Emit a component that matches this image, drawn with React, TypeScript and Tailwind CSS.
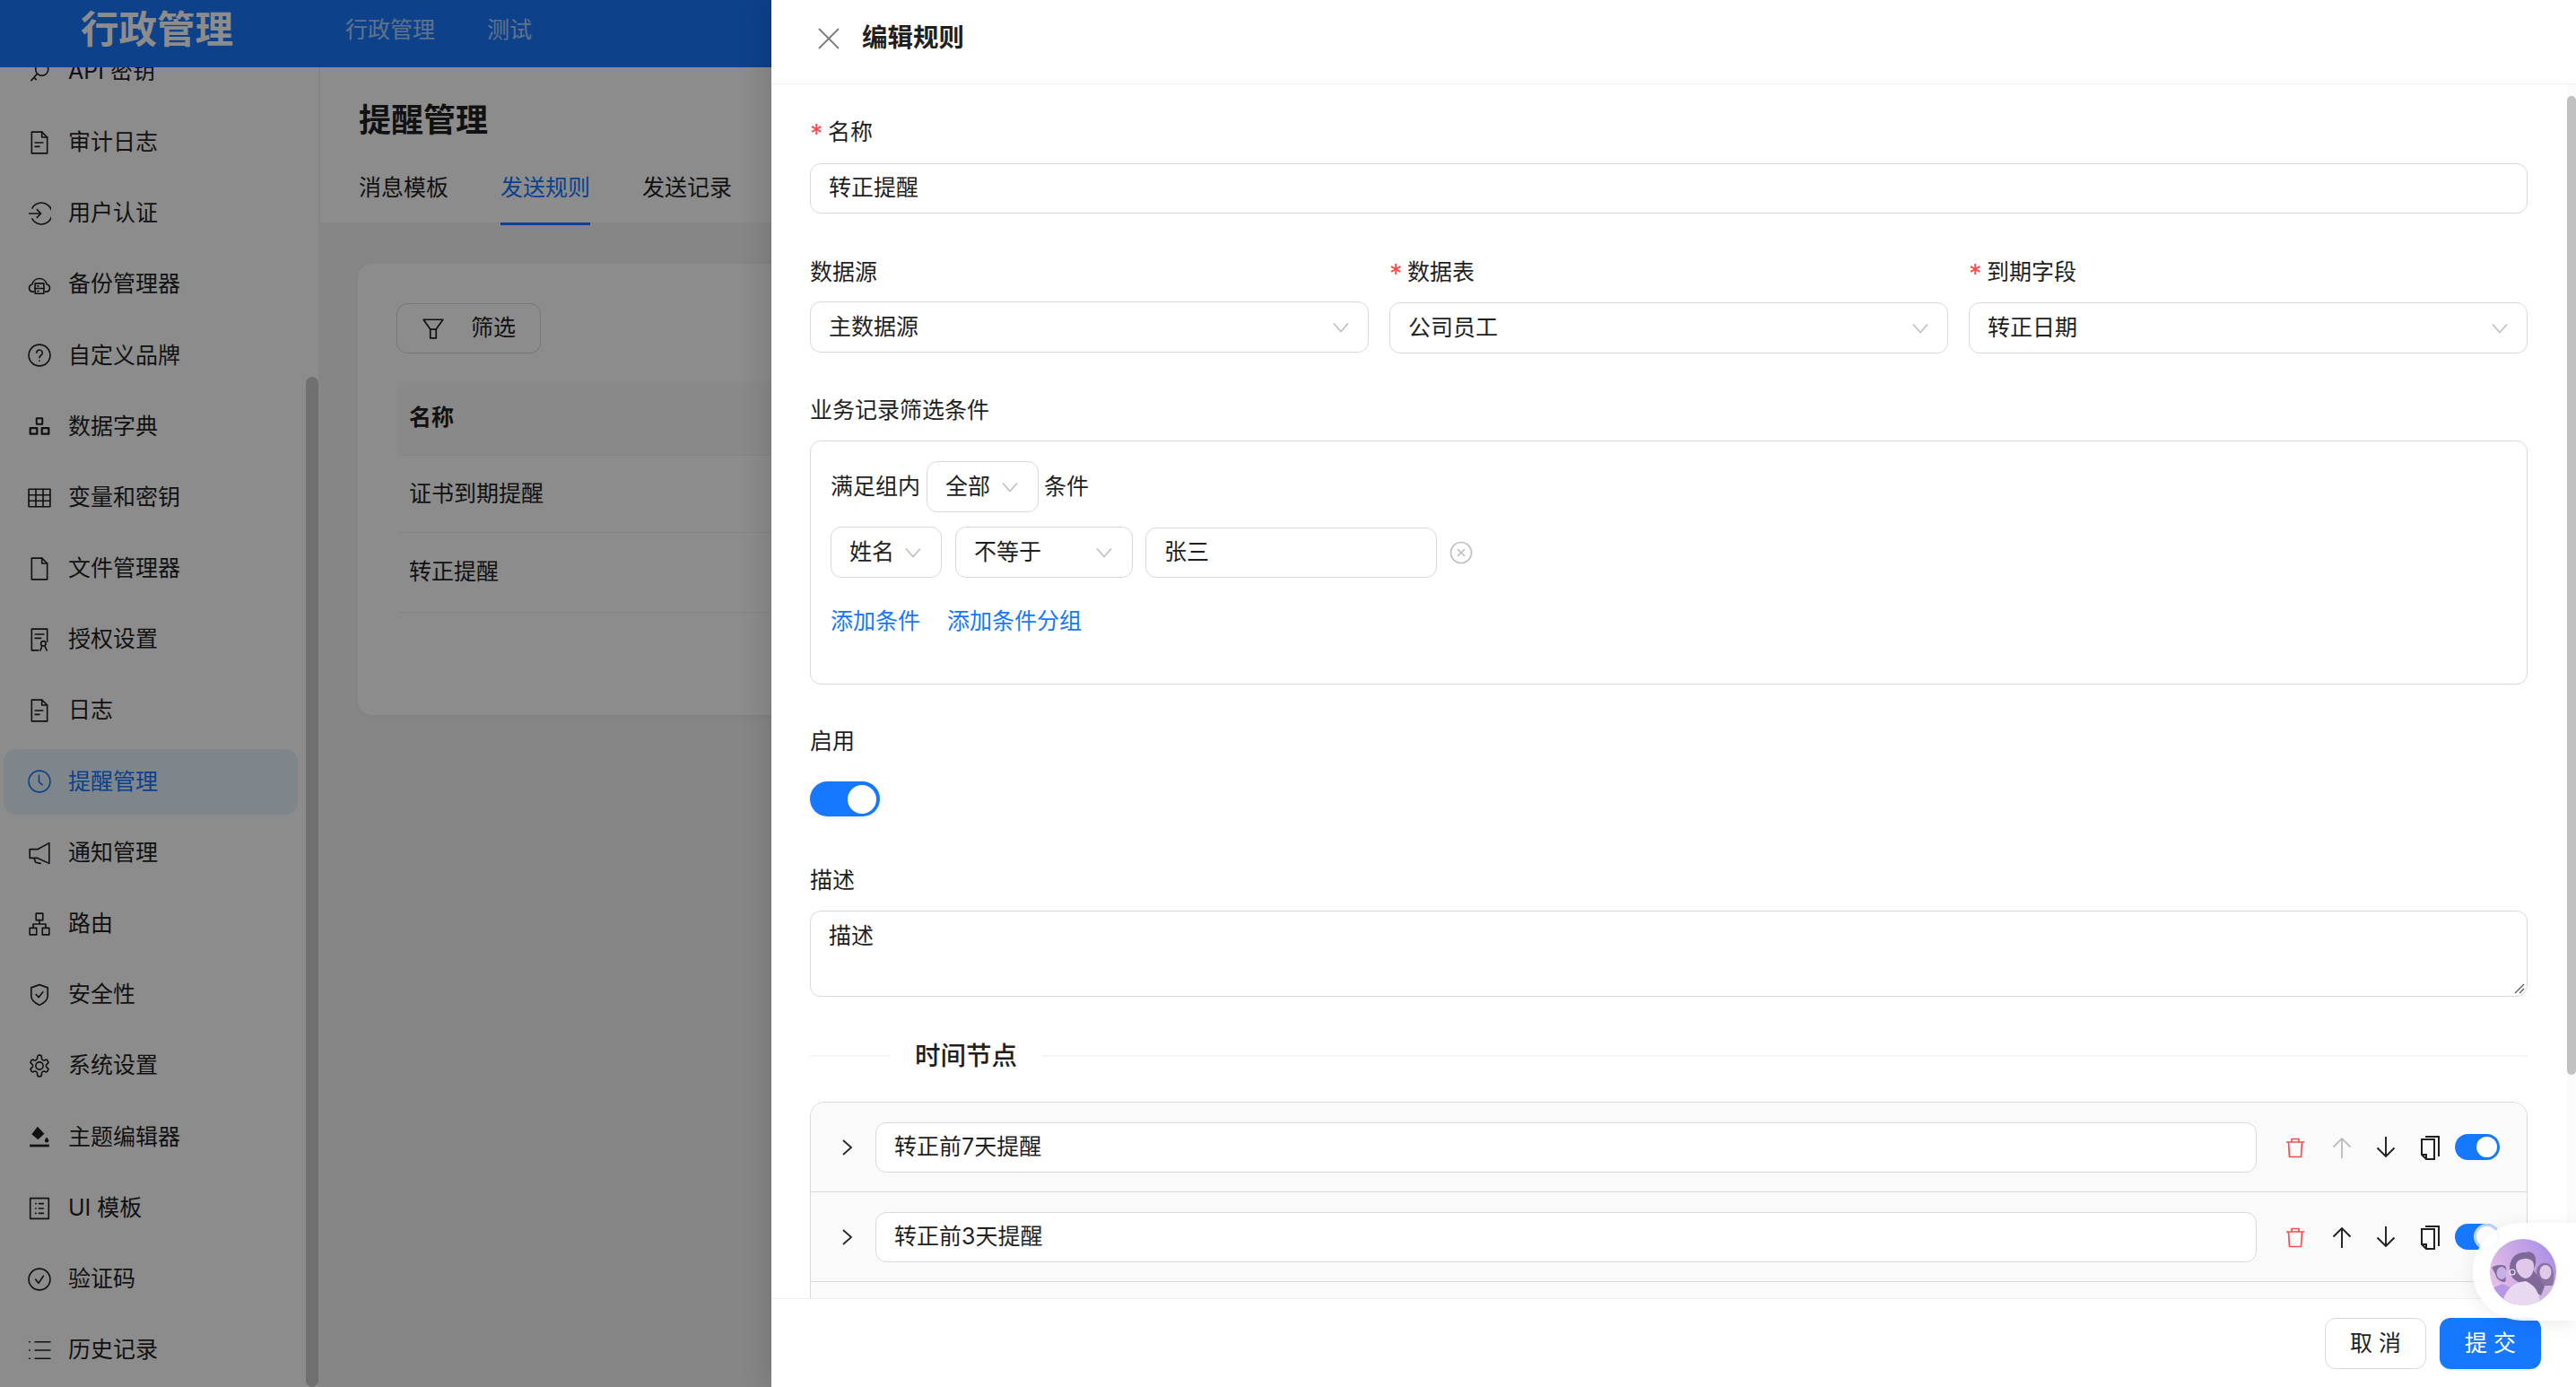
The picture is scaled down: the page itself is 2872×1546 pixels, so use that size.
import React from 'react';

const FONT = "[font-family:'Inter','Noto_Sans_CJK_SC','Noto_Sans',sans-serif]";

function Ico({ children, className = '' }: { children: React.ReactNode; className?: string }) {
  return (
    <svg viewBox="0 0 24 24" fill="none" stroke="currentColor" strokeWidth="1.5" strokeLinecap="round" strokeLinejoin="round" className={`w-[26px] h-[26px] shrink-0 ${className}`}>
      {children}
    </svg>
  );
}

const FileTextI = () => (
  <Ico>
    <path d="M4 1h10.500L20 6.500V23H4z" />
    <path d="M14.500 1v5.500H20" />
    <path d="M7.500 12h8M7.500 16h4.500" />
  </Ico>
);

const icons: Record<string, React.ReactNode> = {
  key: (
    <Ico>
      <circle cx="14.500" cy="9.500" r="6.500" />
      <path d="M9.800 14 3.500 21M6.500 18l2 2" />
    </Ico>
  ),
  file: <FileTextI />,
  login: (
    <Ico>
      <path d="M4.500 6.500a11 11 0 1 1 0 11" />
      <path d="M1.500 12h12M9.500 8l4 4-4 4" />
    </Ico>
  ),
  cloud: (
    <Ico>
      <path d="M6 19.500H5a3.800 3.800 0 0 1-.6-7.500 7.800 7.800 0 0 1 15.200 0A3.800 3.800 0 0 1 19 19.500h-1" />
      <rect x="7.500" y="11" width="9" height="10.500" />
      <path d="M7.500 16.200h9M10 13.700h1M10 18.900h1" />
    </Ico>
  ),
  help: (
    <Ico>
      <circle cx="12" cy="12" r="11" />
      <path d="M9 9.500a3 3 0 1 1 4.600 2.500c-1 .7-1.600 1.200-1.600 2.500" />
      <path d="M12 17.500v.3" />
    </Ico>
  ),
  boxes: (
    <Ico>
      <rect x="9" y="4" width="6" height="6" strokeWidth="1.800" />
      <rect x="2.500" y="14" width="7" height="6" strokeWidth="2.100" />
      <rect x="14.500" y="14" width="7" height="6" strokeWidth="2.100" />
    </Ico>
  ),
  table: (
    <Ico>
      <rect x="1" y="3" width="22" height="18" />
      <path d="M1 9h22M1 15h22M8.300 3v18M15.700 3v18" />
    </Ico>
  ),
  blank: (
    <Ico>
      <path d="M4 1h10.500L20 6.500V23H4z" />
      <path d="M14.500 1v5.500H20" />
    </Ico>
  ),
  badge: (
    <Ico>
      <path d="M11 23H4V1h16v13" />
      <path d="M7.500 6.500h9M7.500 10.500h6" />
      <circle cx="16" cy="16" r="2.500" />
      <path d="m14.500 18.500-1.500 4.500M17.500 18.500l2 4.500" />
    </Ico>
  ),
  clock: (
    <Ico>
      <circle cx="12" cy="12" r="11" />
      <path d="M11.500 5.500v7l3.500 3" />
    </Ico>
  ),
  horn: (
    <Ico>
      <path d="M22 1.500v21l-12-5.500H2V8h8z" />
      <path d="m6.500 17 1.500 4.500 5 1" />
    </Ico>
  ),
  tree: (
    <Ico>
      <rect x="8.500" y="1" width="7" height="7" />
      <rect x="2" y="16" width="7" height="7" />
      <rect x="15" y="16" width="7" height="7" />
      <path d="M12 8v4M5.500 16v-4h13v4" />
    </Ico>
  ),
  shield: (
    <Ico>
      <path d="M12 1.500 20.500 4.500v8.500c0 5-4 7.500-8.500 9.500-4.500-2-8.500-4.500-8.500-9.500V4.500z" />
      <path d="m8.500 11.500 2.700 3 4.300-5.500" />
    </Ico>
  ),
  gear: (
    <Ico>
      <path d="M12.220 1h-.44a2 2 0 0 0-2 2v1.180a2 2 0 0 1-1 1.730l-.43.250a2 2 0 0 1-2 0l-.15-.08a2 2 0 0 0-2.730.730l-.22.380a2 2 0 0 0 .730 2.730l.15.100a2 2 0 0 1 1 1.720v.510a2 2 0 0 1-1 1.740l-.15.090a2 2 0 0 0-.730 2.730l.22.380a2 2 0 0 0 2.730.730l.15-.08a2 2 0 0 1 2 0l.43.250a2 2 0 0 1 1 1.730V21a2 2 0 0 0 2 2h.44a2 2 0 0 0 2-2v-1.180a2 2 0 0 1 1-1.730l.43-.25a2 2 0 0 1 2 0l.15.08a2 2 0 0 0 2.730-.73l.22-.39a2 2 0 0 0-.73-2.730l-.15-.08a2 2 0 0 1-1-1.740v-.5a2 2 0 0 1 1-1.740l.15-.09a2 2 0 0 0 .73-2.730l-.22-.38a2 2 0 0 0-2.730-.73l-.15.08a2 2 0 0 1-2 0l-.43-.25a2 2 0 0 1-1-1.730V3a2 2 0 0 0-2-2z" />
      <circle cx="12" cy="12" r="3.800" />
    </Ico>
  ),
  paint: (
    <svg viewBox="0 0 24 24" className="w-[26px] h-[26px] shrink-0" fill="currentColor">
      <path d="M10 1.500 17 9l-6.500 6L4 9.500z" />
      <path d="M19.500 12.500c1.200 1.500 2 2.500 2 3.500a2 2 0 0 1-4 0c0-1 .8-2 2-3.500z" />
      <rect x="2" y="20" width="20" height="2.500" />
    </svg>
  ),
  listbox: (
    <Ico>
      <rect x="2.500" y="1.500" width="19" height="21" />
      <path d="M8 7h.4M8 12h.4M8 17h.4M11.500 7H16M11.500 12H16M11.500 17H16" />
    </Ico>
  ),
  check: (
    <Ico>
      <circle cx="12" cy="12" r="11" />
      <path d="m8 12 3 4 5-7.500" />
    </Ico>
  ),
  list: (
    <Ico>
      <path d="M7.500 3.500H23M7.500 12H23M7.500 20.500H23M1.500 3.500h.6M1.500 12h.6M1.500 20.500h.6" />
    </Ico>
  ),
};

const menu: [string, string][] = [
  ['key', 'API 密钥'],
  ['file', '审计日志'],
  ['login', '用户认证'],
  ['cloud', '备份管理器'],
  ['help', '自定义品牌'],
  ['boxes', '数据字典'],
  ['table', '变量和密钥'],
  ['blank', '文件管理器'],
  ['badge', '授权设置'],
  ['file', '日志'],
  ['clock', '提醒管理'],
  ['horn', '通知管理'],
  ['tree', '路由'],
  ['shield', '安全性'],
  ['gear', '系统设置'],
  ['paint', '主题编辑器'],
  ['listbox', 'UI 模板'],
  ['check', '验证码'],
  ['list', '历史记录'],
];

function Chevron() {
  return (
    <svg viewBox="0 0 18 12" className="w-[18px] h-[12px] shrink-0 text-[#bfbfbf]" fill="none" stroke="currentColor" strokeWidth="1.600">
      <path d="m1 1.500 8 9 8-9" />
    </svg>
  );
}

function Select({ text, className = '' }: { text: string; className?: string }) {
  return (
    <div className={`flex items-center justify-between border border-[#d9d9d9] rounded-[12px] bg-white ${className}`}>
      <span>{text}</span>
      <Chevron />
    </div>
  );
}

function Field({ text, className = '' }: { text: string; className?: string }) {
  return <div className={`flex items-center border border-[#d9d9d9] rounded-[12px] bg-white ${className}`}>{text}</div>;
}

function Label({ text, req, className = '' }: { text: string; req?: boolean; className?: string }) {
  return (
    <div className={`flex items-center h-[34px] leading-[34px] ${className}`}>
      {req && <span className="text-[#ff4d4f] w-[20px] text-[29px] leading-[34px] pt-[3px]">*</span>}
      <span>{text}</span>
    </div>
  );
}

function Switch({ big, halo }: { big?: boolean; halo?: boolean }) {
  if (big) {
    return (
      <div className="w-[78px] h-[39px] rounded-full bg-[#1677ff] flex items-center justify-end pr-[4px] mt-[28px] shadow-[0_2px_4px_rgba(0,0,0,0.08)]">
        <div className="w-[32px] h-[32px] rounded-full bg-white" />
      </div>
    );
  }
  return (
    <div className="w-[50px] h-[29px] rounded-full bg-[#1677ff] flex items-center justify-end pr-[3px]">
      <div className={`w-[23px] h-[23px] rounded-full bg-white ${halo ? 'shadow-[0_0_0_3px_#bcd7fb]' : ''}`} />
    </div>
  );
}

function NodeRow({ text, upDisabled, halo }: { text: string; upDisabled?: boolean; halo?: boolean }) {
  return (
    <div className="h-[100px] shrink-0 flex items-center border-b border-[#d9d9d9] bg-[#fafafa] box-border">
      <svg viewBox="0 0 14 20" className="w-[14px] h-[20px] ml-[34px] mr-[24px] shrink-0 text-[#262626]" fill="none" stroke="currentColor" strokeWidth="1.800">
        <path d="m2 2 9 8-9 8" />
      </svg>
      <Field text={text} className="h-[56px] w-[1540px] pl-[20px]" />
      <div className="flex items-center ml-[31px]">
        <svg viewBox="0 0 24 24" className="w-[24px] h-[26px] text-[#ff4d4f]" fill="none" stroke="currentColor" strokeWidth="1.700" strokeLinejoin="round">
          <path d="M2 6h20M8 6V2.500h8V6M4.500 6l1 16.500h13L19.500 6" />
        </svg>
        <svg viewBox="0 0 24 24" className={`w-[24px] h-[26px] ml-[28px] ${upDisabled ? 'text-[#bfbfbf]' : 'text-[#1f1f1f]'}`} fill="none" stroke="currentColor" strokeWidth="1.900">
          <path d="M12 24V2M2.500 11.500 12 2l9.500 9.500" />
        </svg>
        <svg viewBox="0 0 24 24" className="w-[24px] h-[26px] ml-[25px] text-[#1f1f1f]" fill="none" stroke="currentColor" strokeWidth="1.900">
          <path d="M12 0v22M2.500 12.500 12 22l9.500-9.500" />
        </svg>
        <svg viewBox="0 0 24 28" className="w-[24px] h-[28px] ml-[25px] text-[#1f1f1f]" fill="none" stroke="currentColor" strokeWidth="2">
          <path d="M3 5h14v22H8l-5-5z" />
          <path d="M3 22h5v5" />
          <path d="M7 2h15v22" />
        </svg>
        <div className="ml-[16px]">
          <Switch halo={halo} />
        </div>
      </div>
    </div>
  );
}

function Avatar() {
  return (
    <svg viewBox="0 0 74 74" className="w-[74px] h-[74px]">
      <defs>
        <linearGradient id="ag" x1="0" y1="0.600" x2="1" y2="0.100">
          <stop offset="0" stopColor="#e6bfe6" />
          <stop offset="1" stopColor="#a78ce8" />
        </linearGradient>
        <clipPath id="ac">
          <circle cx="37" cy="37" r="37" />
        </clipPath>
      </defs>
      <g clipPath="url(#ac)">
        <rect width="74" height="74" fill="url(#ag)" />
        <path d="M0 56 14 50l14 6v18H0z" fill="#b497e8" />
        <path d="M2 32c3-3 11-4 15-2 2 3 1 7 0 10 1 3 1 5 0 8-4 0-8-2-10-6-1-4-3-7-5-10z" fill="#7f6c9f" />
        <ellipse cx="13" cy="38" rx="5.500" ry="7" fill="#c9b0e2" />
        <path d="M52 34c2-8 13-10 17-3 3 6 3 14 0 22l-10 2c-5-6-8-14-7-21z" fill="#8a749f" />
        <ellipse cx="62" cy="37" rx="6.500" ry="8" fill="#dfcaec" />
        <path d="M56 52h14v22H52z" fill="#d0b8e4" />
        <path d="M22 33c0-13 9-19 18-18 3-2 11 0 11 8 1 5-1 8-3 11 4 6 9 12 13 19l-4 10c-8-5-14-10-20-14-7 0-15-6-15-16z" fill="#7e6999" />
        <path d="M29 30c0-6 6-8 11-8 5 0 9 2 9 8 0 7-3 13-9 14-6-1-11-7-11-14z" fill="#dfc8e9" />
        <circle cx="25" cy="37" r="3" fill="none" stroke="#f2e8f7" strokeWidth="1.200" />
        <path d="M14 74c1-14 9-23 20-26l6-1c8 4 15 9 16 27z" fill="#e8d8f0" />
      </g>
    </svg>
  );
}

export default function App() {
  return (
    <div className={`relative w-[2872px] h-[1546px] overflow-hidden bg-[#f4f4f4] text-[25px] text-[#1f1f1f] ${FONT}`}>
      <div className="flex flex-col h-full">
        <header className="relative z-10 h-[75px] shrink-0 bg-[#1877fb] flex items-start text-white">
          <div className="ml-[90px] w-[295px] text-[42.500px] leading-[66px] font-semibold">行政管理</div>
          <div className="text-white/65 leading-[66px]">行政管理</div>
          <div className="text-white/65 leading-[66px] ml-[58px]">测试</div>
        </header>
        <div className="flex flex-1 min-h-0">
          <aside className="relative w-[355px] shrink-0 bg-white overflow-hidden">
            <nav className="-mt-[32px] flex flex-col gap-[6.200px]">
              {menu.map(([icon, label]) => {
                const active = label === '提醒管理';
                return (
                  <div key={label} className={`ml-[4px] w-[328px] h-[73px] shrink-0 rounded-[14px] pl-[27px] flex items-center gap-[19px] ${active ? 'bg-[#e6f4ff] text-[#1677ff]' : ''}`}>
                    {icons[icon]}
                    <span>{label}</span>
                  </div>
                );
              })}
            </nav>
            <div className="absolute right-0 top-[345px] bottom-0 w-[14px] bg-[#cccccc] rounded-t-[7px] rounded-b-[7px]" />
          </aside>
          <main className="flex-1 min-w-0 ml-[2px]">
            <div className="bg-white h-[173px] pl-[43px]">
              <div className="pt-[34px] text-[36px] leading-[50px] font-bold">提醒管理</div>
              <div className="flex gap-[58px] mt-[33px]">
                <div className="h-[59px] leading-[34px]">消息模板</div>
                <div className="h-[59px] leading-[34px] text-[#1677ff] border-b-[3px] border-[#1677ff]">发送规则</div>
                <div className="h-[59px] leading-[34px]">发送记录</div>
              </div>
            </div>
            <div className="mt-[46px] ml-[42px] mr-[42px] h-[503px] bg-white rounded-[16px] shadow-[0_2px_8px_rgba(0,0,0,0.04)] pt-[44px] pl-[43px]">
              <div className="flex items-center w-[161px] h-[56px] border border-[#d9d9d9] rounded-[12px] pl-[27px] gap-[29px]">
                <svg viewBox="0 0 24 24" className="w-[26px] h-[26px] shrink-0" fill="none" stroke="currentColor" strokeWidth="1.600" strokeLinejoin="round">
                  <path d="M2 3h20l-7 10v9H9v-9z" />
                  <path d="M9 13h6" />
                </svg>
                <span>筛选</span>
              </div>
              <div className="mt-[31px] ml-[2px]">
                <div className="flex items-center h-[83px] bg-[#fafafa] font-bold border-b border-[#f0f0f0] pl-[12px]">名称</div>
                <div className="flex items-center h-[86px] border-b border-[#f0f0f0] pl-[12px]">证书到期提醒</div>
                <div className="flex items-center h-[89px] border-b border-[#f0f0f0] pl-[12px]">转正提醒</div>
              </div>
            </div>
          </main>
        </div>
      </div>

      <div className="absolute inset-0 z-20 bg-black/45" />

      <section className="absolute z-30 top-0 right-0 bottom-0 w-[2012px] bg-white flex flex-col shadow-[-8px_0_28px_rgba(0,0,0,0.12)]">
        <div className="h-[94px] shrink-0 border-b border-[#f0f0f0] flex items-center pl-[52px] pb-[8px]">
          <svg viewBox="0 0 24 24" className="w-[24px] h-[24px] text-[#7f7f7f]" fill="none" stroke="currentColor" strokeWidth="2">
            <path d="m1 1 22 22M23 1 1 23" />
          </svg>
          <div className="ml-[25px] text-[28.500px] font-semibold">编辑规则</div>
        </div>

        <div className="relative flex-1 min-h-0 overflow-hidden pl-[43px] pr-[54px]">
          <Label text="名称" req className="mt-[36px]" />
          <Field text="转正提醒" className="mt-[18px] h-[56px] pl-[20px]" />

          <div className="flex gap-[23px] mt-[48px]">
            <div className="flex-1 min-w-0">
              <Label text="数据源" />
              <Select text="主数据源" className="mt-[16px] h-[57px] pl-[20px] pr-[21px]" />
            </div>
            <div className="flex-1 min-w-0">
              <Label text="数据表" req />
              <Select text="公司员工" className="mt-[17px] h-[57px] pl-[20px] pr-[21px]" />
            </div>
            <div className="flex-1 min-w-0">
              <Label text="到期字段" req />
              <Select text="转正日期" className="mt-[17px] h-[57px] pl-[20px] pr-[21px]" />
            </div>
          </div>

          <Label text="业务记录筛选条件" className="mt-[46px]" />
          <div className="mt-[17px] h-[272px] border border-[#d9d9d9] rounded-[12px] pl-[22px] pt-[22px]">
            <div className="flex items-center">
              <span>满足组内</span>
              <Select text="全部" className="w-[125px] h-[57px] ml-[7px] pl-[20px] pr-[22px]" />
              <span className="ml-[6px]">条件</span>
            </div>
            <div className="flex items-center mt-[16px]">
              <Select text="姓名" className="w-[124px] h-[57px] pl-[20px] pr-[22px]" />
              <Select text="不等于" className="w-[198px] h-[57px] ml-[15px] pl-[20px] pr-[22px]" />
              <Field text="张三" className="w-[325px] h-[56px] ml-[14px] pl-[20px]" />
              <svg viewBox="0 0 26 26" className="w-[26px] h-[26px] ml-[14px] text-[#bfbfbf]" fill="none" stroke="currentColor" strokeWidth="1.700">
                <circle cx="13" cy="13" r="11.500" />
                <path d="m9 9 8 8M17 9l-8 8" />
              </svg>
            </div>
            <div className="flex gap-[30px] mt-[31px] leading-[34px] text-[#1677ff]">
              <span>添加条件</span>
              <span>添加条件分组</span>
            </div>
          </div>

          <Label text="启用" className="mt-[46px]" />
          <Switch big />

          <Label text="描述" className="mt-[54px]" />
          <div className="relative mt-[17px] h-[96px] border border-[#d9d9d9] rounded-[12px] pl-[20px] pt-[10px] leading-[34px]">
            描述
            <svg viewBox="0 0 12 12" className="absolute right-[2px] bottom-[2px] w-[12px] h-[12px] text-[#555]" fill="none" stroke="currentColor" strokeWidth="1.200">
              <path d="M11 1 1 11M11 6l-5 5" />
            </svg>
          </div>

          <div className="flex items-center mt-[46px] h-[40px]">
            <div className="w-[89px] h-[2px] bg-[#f5f5f5]" />
            <div className="px-[28px] text-[28.500px] font-medium">时间节点</div>
            <div className="flex-1 h-[2px] bg-[#f5f5f5]" />
          </div>

          <div className="mt-[31px] border border-[#d9d9d9] rounded-t-[16px] overflow-hidden bg-[#fafafa] h-[240px]">
            <NodeRow text="转正前7天提醒" upDisabled />
            <NodeRow text="转正前3天提醒" halo />
          </div>

          <div className="absolute right-0 top-0 bottom-0 w-[10px] bg-[#fafafa]">
            <div className="absolute left-0 right-0 top-[13px] h-[1091px] bg-[#c1c1c1] rounded-t-[5px] rounded-b-[5px]" />
          </div>
        </div>

        <div className="h-[99px] shrink-0 border-t border-[#f0f0f0] flex items-start justify-end pt-[21px] pr-[39px] gap-[15px]">
          <div className="w-[113px] h-[57px] flex items-center justify-center border border-[#d9d9d9] rounded-[12px]">取 消</div>
          <div className="w-[113px] h-[57px] flex items-center justify-center rounded-[12px] bg-[#1677ff] text-white shadow-[0_2px_0_rgba(5,145,255,0.1)]">提 交</div>
        </div>
      </section>

      <div className="absolute z-40 right-0 top-[1363px] w-[115px] h-[109px] bg-white/90 rounded-l-[55px] flex items-center pl-[19px] shadow-[0_4px_20px_rgba(0,0,0,0.08)]">
        <Avatar />
      </div>
    </div>
  );
}
